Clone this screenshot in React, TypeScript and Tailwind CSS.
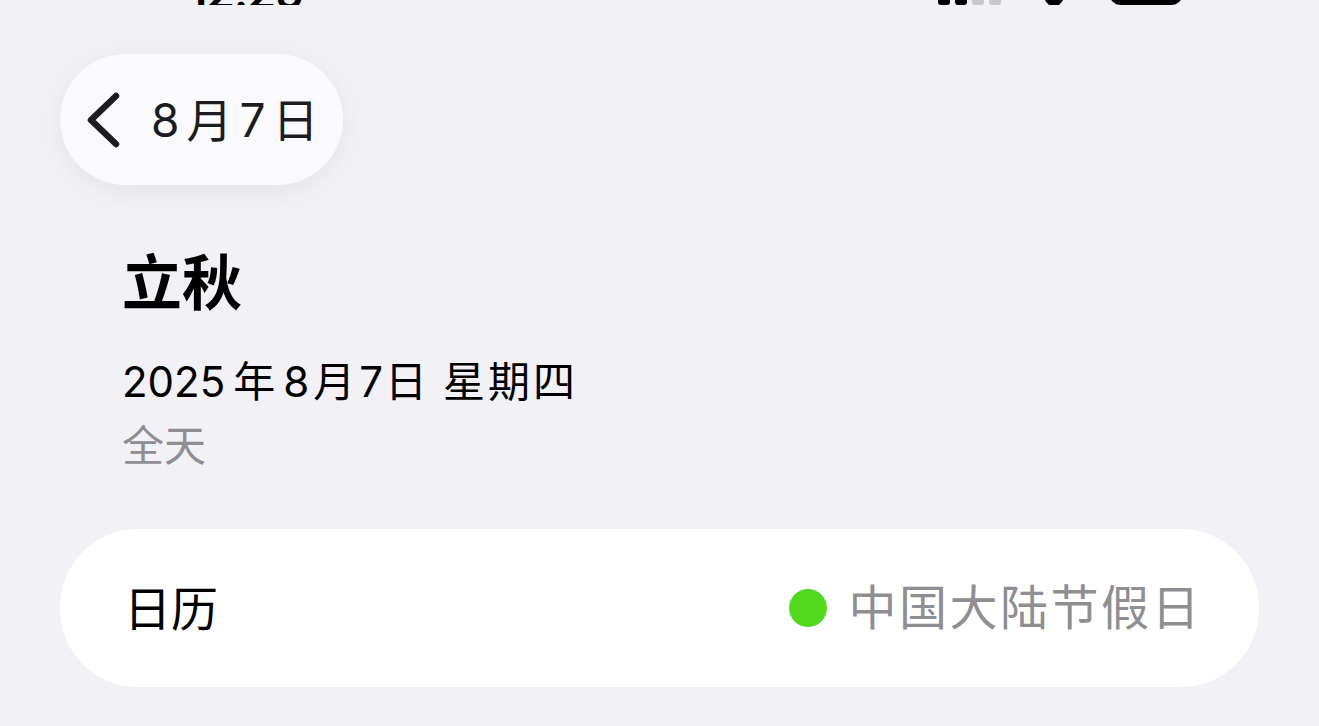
const cjk = { fontFamily: 'Inter, "Noto Sans CJK SC", "Noto Sans", sans-serif' }

function StatusBar() {
  return (
    <div className="flex h-[5px] items-end overflow-hidden">
      <span className="ml-[188px] mb-[-10px] text-[46px] leading-none font-semibold tracking-tight text-black">12:25</span>
      <div className="ml-auto flex items-end gap-[5px]">
        <div className="h-[20px] w-[12px] rounded-[3px] bg-black" />
        <div className="h-[26px] w-[12px] rounded-[3px] bg-black" />
        <div className="h-[32px] w-[12px] rounded-[3px] bg-[#c7c7cc]" />
        <div className="h-[38px] w-[12px] rounded-[3px] bg-[#c7c7cc]" />
      </div>
      <div className="ml-[46px] mb-[-2px] h-[14px] w-[14px] rotate-45 rounded-[3px] bg-black" />
      <div className="ml-[48px] mr-[136px] h-[40px] w-[74px] rounded-[12px] bg-black" />
    </div>
  )
}

function Chevron() {
  return (
    <svg width="40" height="60" viewBox="0 0 40 60" fill="none">
      <path d="M31 6 L6 30 L31 54" stroke="#1c1c1e" strokeWidth="6.5" strokeLinecap="round" strokeLinejoin="round" />
    </svg>
  )
}

export default function App() {
  return (
    <div className="h-[726px] w-[1319px] overflow-hidden bg-[#f2f1f6] text-black" style={cjk}>
      <StatusBar />

      <div className="px-[60px] pt-[49px]">
        <button className="flex h-[131px] w-[283px] items-center rounded-full bg-[#fafafc] pl-[25px] shadow-[0_6px_30px_rgba(0,0,0,0.06)]">
          <Chevron />
          <span className="ml-[26px] flex items-baseline text-[46px] leading-none text-[#1c1c1e]">
            <span>8</span>
            <span className="ml-[7px]">月</span>
            <span className="ml-[7px]">7</span>
            <span className="ml-[7px]">日</span>
          </span>
        </button>

        <div className="pl-[62px] pt-[68px]">
          <h1 className="text-[60px] leading-none font-bold">立秋</h1>
          <p className="mt-[48px] flex items-baseline text-[42px] leading-none">
            <span>2025</span>
            <span className="ml-[8px]">年</span>
            <span className="ml-[8px]">8</span>
            <span className="ml-[4px]">月</span>
            <span className="ml-[4px]">7</span>
            <span className="ml-[2px]">日</span>
            <span className="ml-[16px] tracking-[3px]">星期四</span>
          </p>
          <p className="mt-[22px] text-[42px] leading-none text-[#8e8e93]">全天</p>
        </div>

        <div className="mt-[62px] flex h-[158px] items-center rounded-[78px] bg-white pl-[64px] pr-[57px]">
          <span className="text-[47px] leading-none">日历</span>
          <div className="ml-auto flex items-center">
            <div className="h-[38px] w-[38px] rounded-full bg-[#52d81c]" />
            <span className="ml-[21px] text-[48px] leading-none tracking-[2.5px] text-[#8e8e93]">中国大陆节假日</span>
          </div>
        </div>
      </div>
    </div>
  )
}
